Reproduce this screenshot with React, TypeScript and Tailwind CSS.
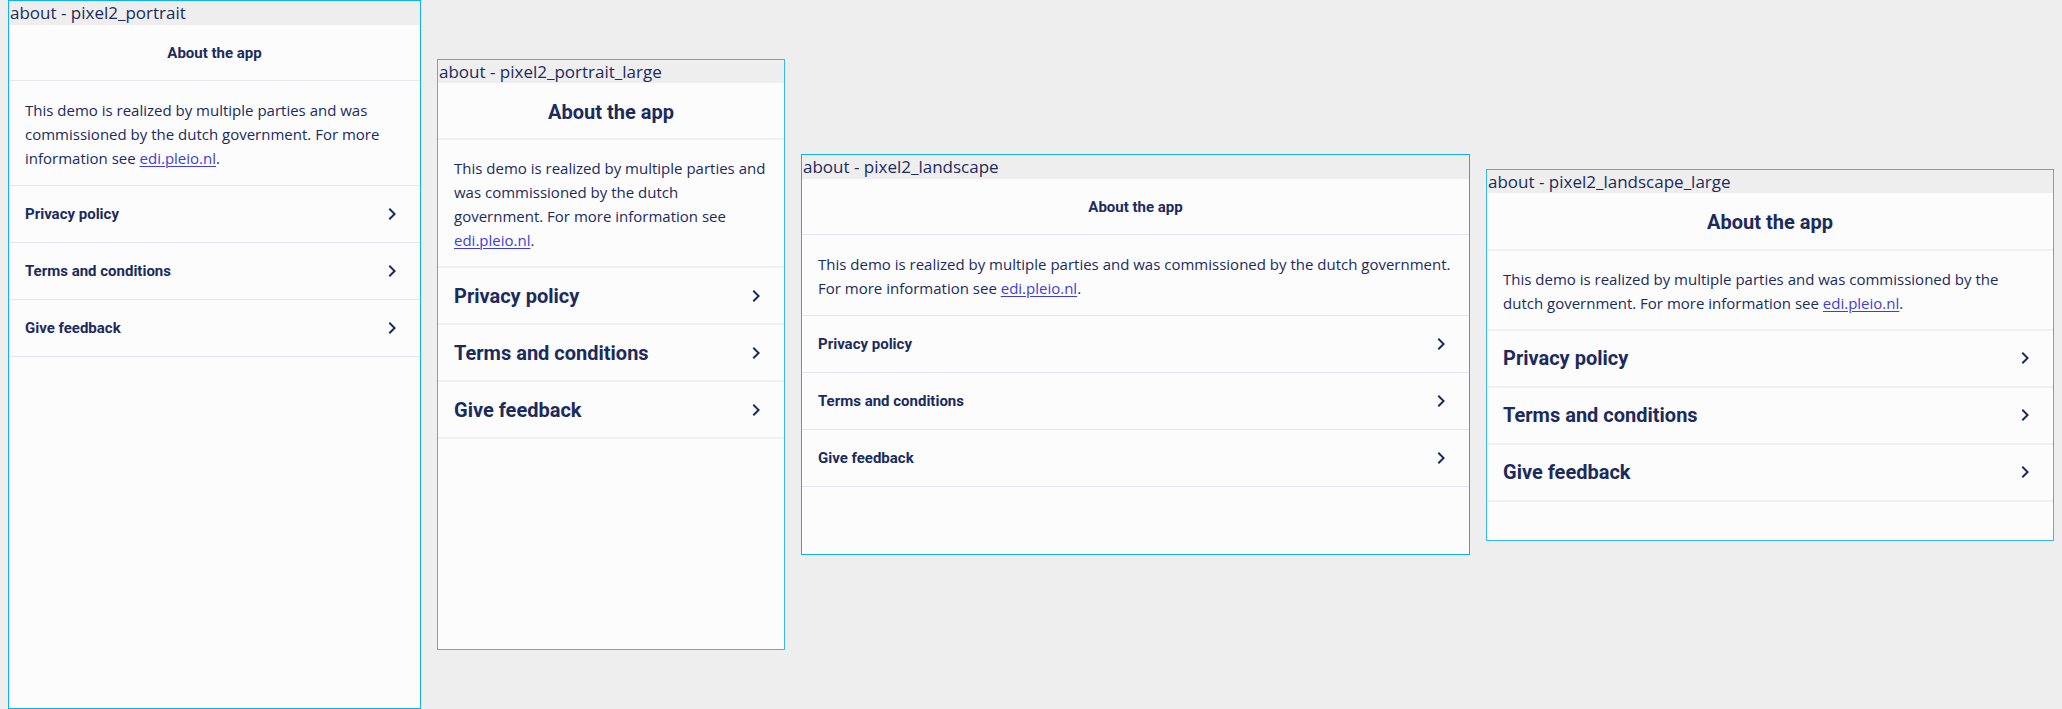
import React from "react";

const NAVY = "text-[#1b2b5e]";

function Chevron() {
  return (
    <svg width="24" height="24" viewBox="0 0 24 24" className="shrink-0 fill-[#1b2b5e]">
      <path d="M10 6L8.59 7.41 13.17 12l-4.58 4.59L10 18l6-6z" />
    </svg>
  );
}

const Link = () => (
  <span className="text-[#3e3ee0] underline decoration-1 underline-offset-2">edi.pleio.nl</span>
);

type FrameProps = {
  label: string;
  frameClass: string;
  large?: boolean;
  bodyLines: React.ReactNode[];
  bodyClass: string;
  headerClass: string;
};

function Frame({ label, frameClass, large, bodyLines, bodyClass, headerClass }: FrameProps) {
  const sep = large ? "border-b-2 border-[#f0f0f0]" : "border-b border-[#e5e7ee]";
  const labelH = large ? "h-[23px] leading-[23px]" : "h-6 leading-6";
  const titleSize = large ? "text-[20px]" : "text-[15px]";
  const itemH = "h-[57px]";
  return (
    <div className={`flex shrink-0 flex-col overflow-hidden border bg-[#fcfcfc] ${frameClass}`}>
      <div
        className={`${labelH} shrink-0 whitespace-nowrap bg-[#eeeeee] pl-px text-[17px] ${NAVY} [font-family:'Open_Sans',sans-serif]`}
      >
        {label}
      </div>
      <div
        className={`flex shrink-0 items-center justify-center pt-[2px] ${headerClass} ${sep} ${titleSize} font-bold ${NAVY} [font-family:Roboto,sans-serif]`}
      >
        About the app
      </div>
      <div
        className={`shrink-0 px-4 ${bodyClass} ${sep} text-[15px] leading-6 ${NAVY} [font-family:'Open_Sans',sans-serif]`}
      >
        {bodyLines.map((l, i) => (
          <div key={i} className="whitespace-nowrap">
            {l}
          </div>
        ))}
      </div>
      {["Privacy policy", "Terms and conditions", "Give feedback"].map((t) => (
        <div
          key={t}
          className={`flex shrink-0 items-center justify-between pl-4 pr-4 ${itemH} ${sep} ${titleSize} font-bold ${NAVY} [font-family:Roboto,sans-serif]`}
        >
          <span>{t}</span>
          <Chevron />
        </div>
      ))}
    </div>
  );
}

export default function App() {
  return (
    <div className="flex h-[709px] w-[2062px] items-center gap-4 overflow-hidden bg-[#eeeeee] px-2">
      <Frame
        label="about - pixel2_portrait"
        frameClass="w-[413px] h-[709px] border-[#0eb1f2]"
        headerClass="h-[56px]"
        bodyClass="pt-[17px] pb-[15px]"
        bodyLines={[
          "This demo is realized by multiple parties and was",
          "commissioned by the dutch government. For more",
          <>
            information see <Link />.
          </>,
        ]}
      />
      <Frame
        large
        label="about - pixel2_portrait_large"
        frameClass="w-[348px] h-[591px] border-[#35bbf0]"
        headerClass="h-[57px]"
        bodyClass="pt-4 pb-[14px]"
        bodyLines={[
          "This demo is realized by multiple parties and",
          "was commissioned by the dutch",
          "government. For more information see",
          <>
            <Link />.
          </>,
        ]}
      />
      <Frame
        label="about - pixel2_landscape"
        frameClass="w-[669px] h-[401px] border-[#0eb1f2]"
        headerClass="h-[56px]"
        bodyClass="pt-[17px] pb-[15px]"
        bodyLines={[
          "This demo is realized by multiple parties and was commissioned by the dutch government.",
          <>
            For more information see <Link />.
          </>,
        ]}
      />
      <Frame
        large
        label="about - pixel2_landscape_large"
        frameClass="w-[568px] h-[372px] border-[#35bbf0]"
        headerClass="h-[58px]"
        bodyClass="pt-4 pb-[14px]"
        bodyLines={[
          "This demo is realized by multiple parties and was commissioned by the",
          <>
            dutch government. For more information see <Link />.
          </>,
        ]}
      />
    </div>
  );
}
